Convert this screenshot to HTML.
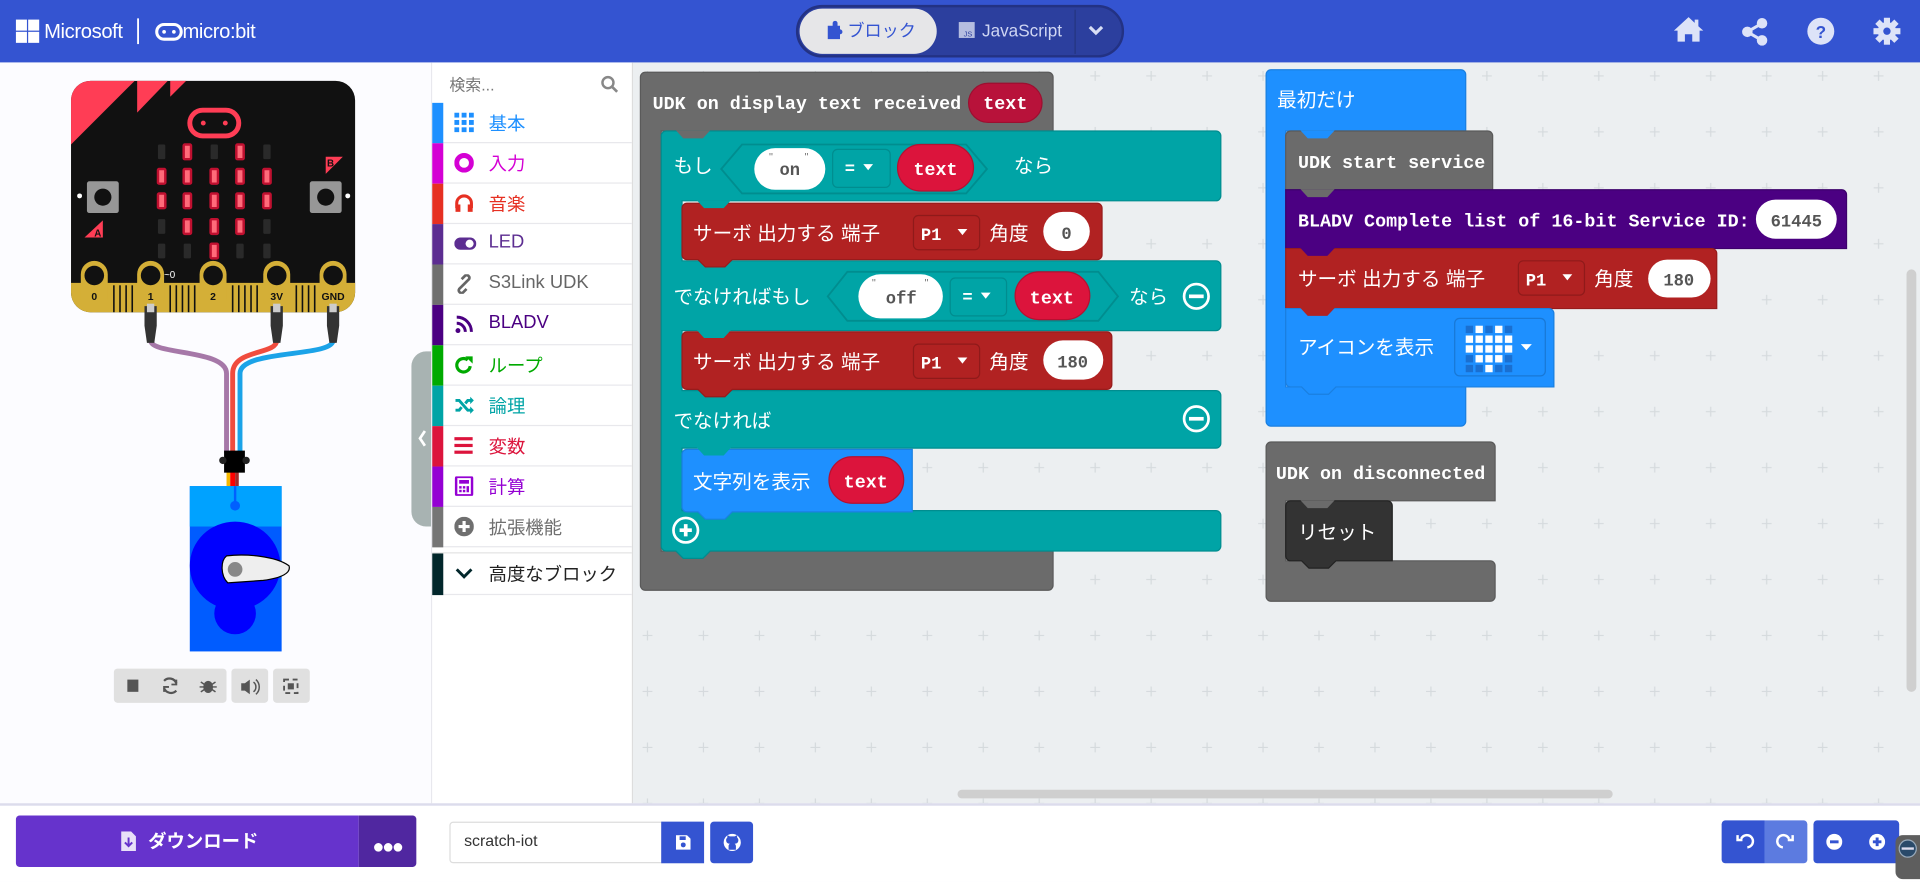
<!DOCTYPE html>
<html><head><meta charset="utf-8">
<style>
html,body{margin:0;padding:0;width:1920px;height:881px;overflow:hidden;background:#fcfcff;}
#root{position:absolute;left:0;top:0;width:1568px;height:720px;transform:scale(1.22449);transform-origin:0 0;font-family:"Liberation Sans","Noto Sans CJK JP",sans-serif;overflow:hidden;}
.abs{position:absolute;}
.tb{position:absolute;left:353px;width:163px;height:32px;border-bottom:1px solid #e8e8ec;font-size:15px;}
.tb .bar{position:absolute;left:0;top:0;width:9px;height:33px;}
.tb .lbl{position:absolute;left:46px;top:6px;}
.tb svg{position:absolute;left:18px;top:8px;}
</style></head><body>
<div id="root">
<!-- header -->
<div class="abs" style="left:0;top:0;width:1568px;height:51px;background:#3454d1;"></div>
<svg class="abs" style="left:0;top:0" width="1568" height="51">
 <rect x="13" y="16" width="9" height="9" fill="#fff"/><rect x="23" y="16" width="9" height="9" fill="#fff"/>
 <rect x="13" y="26" width="9" height="9" fill="#fff"/><rect x="23" y="26" width="9" height="9" fill="#fff"/>
 <text x="36" y="31" fill="#fff" font-size="16.5" font-family="Liberation Sans" letter-spacing="-0.3">Microsoft</text>
 <rect x="112" y="15" width="1.5" height="21" fill="#fff"/>
 <rect x="128" y="20" width="20" height="12" rx="6" fill="none" stroke="#fff" stroke-width="2.5"/>
 <circle cx="134" cy="26" r="1.5" fill="#fff"/><circle cx="142" cy="26" r="1.5" fill="#fff"/>
 <text x="149" y="31" fill="#fff" font-size="16.5" font-family="Liberation Sans" letter-spacing="-0.3">micro:bit</text>
 <rect x="651" y="5" width="266" height="41" rx="20.5" fill="#2c3f9e" stroke="#233284" stroke-width="2"/>
 <rect x="653" y="7" width="112" height="37" rx="18.5" fill="#e6e6e8"/>
 <path d="M676 21h4v-2a2 2 0 0 1 4 0v2h2v3a2 2 0 0 1 0 4v4h-10z" fill="#3454d1"/>
 <text x="692" y="30" fill="#3454d1" font-size="14" font-family="Noto Sans CJK JP">ブロック</text>
 <rect x="783" y="18" width="13" height="13" fill="#b5bde0"/><text x="787" y="30" fill="#2c3f9e" font-size="6" font-family="Liberation Sans">JS</text>
 <text x="802" y="30" fill="#cfd6f3" font-size="14" font-family="Liberation Sans">JavaScript</text>
 <line x1="878" y1="8" x2="878" y2="44" stroke="#24347f" stroke-width="1"/>
 <path d="M890 22l5 5 5-5" stroke="#d8def5" stroke-width="2.6" fill="none"/>
 <path d="M1379 14l-12 11h3v9h6v-6h6v6h6v-9h3l-4-3.6V16h-3v2.7z" fill="#dde3f8"/>
 <g fill="#dde3f8"><circle cx="1439" cy="19" r="4.3"/><circle cx="1427" cy="26" r="4.3"/><circle cx="1439" cy="33" r="4.3"/></g>
 <path d="M1439 19L1427 26L1439 33" stroke="#dde3f8" stroke-width="2.5" fill="none"/>
 <circle cx="1487" cy="25.5" r="11" fill="#dde3f8"/>
 <text x="1487" y="31" fill="#3454d1" font-size="14" font-weight="bold" text-anchor="middle" font-family="Liberation Sans">?</text>
 <g transform="translate(1541 25.5)" fill="#dde3f8"><circle r="7.5"/>
  <rect x="-2.5" y="-11" width="5" height="22"/><rect x="-2.5" y="-11" width="5" height="22" transform="rotate(45)"/><rect x="-2.5" y="-11" width="5" height="22" transform="rotate(90)"/><rect x="-2.5" y="-11" width="5" height="22" transform="rotate(135)"/>
  <circle r="3" fill="#3454d1"/></g>
</svg>

<!-- simulator -->
<div class="abs" style="left:0;top:51px;width:352px;height:606px;background:#fcfcff;border-right:1px solid #e8e8ee;"></div>
<svg class="abs" style="left:0;top:0" width="353" height="657">
 <rect x="58" y="66" width="232" height="189" rx="16" fill="#111"/>
 <path d="M74 66H110L58 118V82A16 16 0 0 1 74 66z" fill="#ff3d55"/>
 <path d="M112 66H137L112 92z" fill="#ff3d55"/>
 <path d="M139 66H152L139 79z" fill="#ff3d55"/>
 <rect x="155" y="90" width="40" height="21" rx="10.5" fill="none" stroke="#ff3d55" stroke-width="4"/>
 <circle cx="166" cy="100.5" r="2" fill="#ff3d55"/><circle cx="184" cy="100.5" r="2" fill="#ff3d55"/>
 <g fill="#2a2a2a">
  <rect x="129" y="118" width="6" height="12" rx="1"/><rect x="172" y="118" width="6" height="12" rx="1"/><rect x="215" y="118" width="6" height="12" rx="1"/>
  <rect x="129" y="179" width="6" height="12" rx="1"/><rect x="215" y="179" width="6" height="12" rx="1"/>
  <rect x="129" y="199" width="6" height="12" rx="1"/><rect x="150" y="199" width="6" height="12" rx="1"/><rect x="193" y="199" width="6" height="12" rx="1"/><rect x="215" y="199" width="6" height="12" rx="1"/>
 </g>
 <g fill="#ff6b7a" stroke="#c01030" stroke-width="2">
  <rect x="150" y="118" width="6" height="12" rx="1"/><rect x="193" y="118" width="6" height="12" rx="1"/>
  <rect x="129" y="138" width="6" height="12" rx="1"/><rect x="150" y="138" width="6" height="12" rx="1"/><rect x="172" y="138" width="6" height="12" rx="1"/><rect x="193" y="138" width="6" height="12" rx="1"/><rect x="215" y="138" width="6" height="12" rx="1"/>
  <rect x="129" y="158" width="6" height="12" rx="1"/><rect x="150" y="158" width="6" height="12" rx="1"/><rect x="172" y="158" width="6" height="12" rx="1"/><rect x="193" y="158" width="6" height="12" rx="1"/><rect x="215" y="158" width="6" height="12" rx="1"/>
  <rect x="150" y="179" width="6" height="12" rx="1"/><rect x="172" y="179" width="6" height="12" rx="1"/><rect x="193" y="179" width="6" height="12" rx="1"/>
  <rect x="172" y="199" width="6" height="12" rx="1"/>
 </g>
 <rect x="71" y="148" width="26" height="26" rx="2" fill="#979797"/><circle cx="84" cy="161" r="7" fill="#111"/>
 <rect x="253" y="148" width="26" height="26" rx="2" fill="#979797"/><circle cx="266" cy="161" r="7" fill="#111"/>
 <circle cx="65" cy="160" r="2" fill="#fff"/><circle cx="284" cy="160" r="2" fill="#fff"/>
 <path d="M69 194L84 180V194z" fill="#ff3d55"/><text x="77" y="193" font-size="8" font-weight="bold" fill="#111" font-family="Liberation Sans">A</text>
 <path d="M266 128H280L266 142z" fill="#ff3d55"/><text x="267" y="136" font-size="8" font-weight="bold" fill="#111" font-family="Liberation Sans">B</text>
 <path d="M58 231H290V239A16 16 0 0 1 274 255H74A16 16 0 0 1 58 239z" fill="#d4af37"/>
 <g stroke="#111" stroke-width="1.3">
  <line x1="93" y1="233" x2="93" y2="255"/><line x1="98" y1="233" x2="98" y2="255"/><line x1="103" y1="233" x2="103" y2="255"/><line x1="108" y1="233" x2="108" y2="255"/>
  <line x1="139" y1="233" x2="139" y2="255"/><line x1="144" y1="233" x2="144" y2="255"/><line x1="149" y1="233" x2="149" y2="255"/><line x1="154" y1="233" x2="154" y2="255"/><line x1="159" y1="233" x2="159" y2="255"/>
  <line x1="190" y1="233" x2="190" y2="255"/><line x1="195" y1="233" x2="195" y2="255"/><line x1="200" y1="233" x2="200" y2="255"/><line x1="205" y1="233" x2="205" y2="255"/><line x1="210" y1="233" x2="210" y2="255"/>
  <line x1="242" y1="233" x2="242" y2="255"/><line x1="247" y1="233" x2="247" y2="255"/><line x1="252" y1="233" x2="252" y2="255"/><line x1="257" y1="233" x2="257" y2="255"/>
 </g>
 <g fill="#d4af37">
  <rect x="66" y="213" width="22" height="42" rx="11"/><rect x="112" y="213" width="22" height="42" rx="11"/><rect x="163" y="213" width="22" height="42" rx="11"/><rect x="215" y="213" width="22" height="42" rx="11"/><rect x="261" y="213" width="22" height="42" rx="11"/>
 </g>
 <g fill="#111"><circle cx="77" cy="225" r="8"/><circle cx="123" cy="225" r="8"/><circle cx="174" cy="225" r="8"/><circle cx="226" cy="225" r="8"/><circle cx="272" cy="225" r="8"/></g>
 <g font-size="8.5" font-weight="bold" fill="#111" font-family="Liberation Sans" text-anchor="middle">
  <text x="77" y="245">0</text><text x="123" y="245">1</text><text x="174" y="245">2</text><text x="226" y="245">3V</text><text x="272" y="245">GND</text></g>
 <text x="134" y="227" font-size="8" fill="#fff" font-family="Liberation Sans">~0</text>
 <path d="M123 278C123 290 185 285 185 305V370" stroke="#a678a8" stroke-width="4" fill="none"/>
 <path d="M226 278C226 290 190 285 190 305V370" stroke="#f04c3e" stroke-width="4" fill="none"/>
 <path d="M272 278C272 292 196 285 196 305V370" stroke="#1ba3e8" stroke-width="4" fill="none"/>
 <g fill="#333"><path d="M118 250h10v16l-2 14h-6l-2-14z"/><path d="M221 250h10v16l-2 14h-6l-2-14z"/><path d="M267 250h10v16l-2 14h-6l-2-14z"/></g>
 <g fill="#ccc"><rect x="120" y="248" width="6" height="7"/><rect x="223" y="248" width="6" height="7"/><rect x="269" y="248" width="6" height="7"/></g>
 <rect x="185" y="384" width="3" height="13" fill="#f5b800"/><rect x="188" y="384" width="4" height="13" fill="#f00"/><rect x="192" y="384" width="3" height="13" fill="#a52a2a"/>
 <rect x="183" y="368" width="17" height="18" fill="#000"/><circle cx="182" cy="376" r="3" fill="#222"/><circle cx="201" cy="376" r="3" fill="#222"/>
 <rect x="155" y="397" width="75" height="135" fill="#005cff"/>
 <rect x="155" y="397" width="75" height="33" fill="#00a2ff"/>
 <line x1="192" y1="397" x2="192" y2="410" stroke="#0060ff" stroke-width="2"/><circle cx="192" cy="413" r="4" fill="#0060ff"/>
 <ellipse cx="192" cy="462" rx="37" ry="36" fill="#0000ff"/><circle cx="192" cy="501" r="17" fill="#0000ff"/>
 <path d="M185 454C200 452 225 454 236 462C238 468 230 472 215 474L186 476C180 470 180 458 185 454z" fill="#eee" stroke="#000" stroke-width="1"/>
 <circle cx="192" cy="465" r="6" fill="#888"/>
 <rect x="93" y="546" width="92" height="28" rx="3" fill="#e0e0e0"/>
 <rect x="189" y="546" width="30" height="28" rx="3" fill="#e0e0e0"/>
 <rect x="223" y="546" width="30" height="28" rx="3" fill="#e0e0e0"/>
 <rect x="104" y="555" width="9" height="10" fill="#555"/>
 <path d="M134 556a6 6 0 0 1 10 2M144 564a6 6 0 0 1-10-2" stroke="#555" stroke-width="1.8" fill="none"/>
 <path d="M144 555v4h-4M134 565v-4h4" stroke="#555" stroke-width="1.5" fill="none"/>
 <ellipse cx="170" cy="561" rx="4" ry="5" fill="#555"/><path d="M164 557l12 8M176 557l-12 8M163 561h14" stroke="#555" stroke-width="1.2"/>
 <path d="M197 558h3l4-3v12l-4-3h-3z" fill="#555"/><path d="M207 557a5 5 0 0 1 0 8M209 555a8 8 0 0 1 0 12" stroke="#555" stroke-width="1.2" fill="none"/>
 <rect x="232" y="555" width="11" height="11" fill="none" stroke="#555" stroke-width="1.5" stroke-dasharray="4 3"/><rect x="235" y="558" width="5" height="5" fill="#555"/>
 <path d="M352 287V430H348A12 12 0 0 1 336 418V299A12 12 0 0 1 348 287z" fill="#a8b3b2"/>
 <path d="M347 352l-4 6 4 6" stroke="#fff" stroke-width="2.2" fill="none"/>
</svg>

<!-- toolbox -->
<div class="abs" style="left:353px;top:51px;width:163px;height:606px;background:#fff;border-right:1px solid #ddd;"></div>
<div class="abs" style="left:367px;top:59px;font-size:13px;color:#777;">検索...</div>
<svg class="abs" style="left:490px;top:61px" width="16" height="16"><circle cx="6.5" cy="6.5" r="4.5" stroke="#888" stroke-width="2" fill="none"/><path d="M10 10l4 4" stroke="#888" stroke-width="2.2"/></svg>
<div class="tb" style="top:84px;color:#1e90ff"><div class="bar" style="background:#1e90ff"></div><svg width="16" height="16"><g fill="#1e90ff"><rect x="0" y="0" width="4" height="4"/><rect x="6" y="0" width="4" height="4"/><rect x="12" y="0" width="4" height="4"/><rect x="0" y="6" width="4" height="4"/><rect x="6" y="6" width="4" height="4"/><rect x="12" y="6" width="4" height="4"/><rect x="0" y="12" width="4" height="4"/><rect x="6" y="12" width="4" height="4"/><rect x="12" y="12" width="4" height="4"/></g></svg><span class="lbl">基本</span></div>
<div class="tb" style="top:117px;color:#d400d4"><div class="bar" style="background:#d400d4"></div><svg width="16" height="16"><circle cx="8" cy="8" r="6" stroke="#d400d4" stroke-width="4" fill="none"/></svg><span class="lbl">入力</span></div>
<div class="tb" style="top:150px;color:#e63022"><div class="bar" style="background:#e63022"></div><svg width="16" height="16"><path d="M2 12V8a6 6 0 0 1 12 0v4" stroke="#e63022" stroke-width="2.5" fill="none"/><rect x="1" y="9" width="4" height="6" fill="#e63022"/><rect x="11" y="9" width="4" height="6" fill="#e63022"/></svg><span class="lbl">音楽</span></div>
<div class="tb" style="top:183px;color:#5c2d91"><div class="bar" style="background:#5c2d91"></div><svg width="18" height="16"><rect x="0" y="3" width="18" height="10" rx="5" fill="#5c2d91"/><circle cx="12.5" cy="8" r="3.3" fill="#fff"/></svg><span class="lbl">LED</span></div>
<div class="tb" style="top:216px;color:#666"><div class="bar" style="background:#6f6f6f"></div><svg width="16" height="16"><path d="M7 9l-3 3a2.2 2.2 0 0 0 3 3l3-3M9 7l3-3a2.2 2.2 0 0 0-3-3L6 4M6 10l4-4" stroke="#666" stroke-width="2.2" fill="none"/></svg><span class="lbl">S3Link UDK</span></div>
<div class="tb" style="top:249px;color:#4b0082"><div class="bar" style="background:#4b0082"></div><svg width="16" height="16"><circle cx="3" cy="13" r="2" fill="#4b0082"/><path d="M2 7a7 7 0 0 1 7 7M2 2a12 12 0 0 1 12 12" stroke="#4b0082" stroke-width="2.4" fill="none"/></svg><span class="lbl">BLADV</span></div>
<div class="tb" style="top:282px;color:#00aa00"><div class="bar" style="background:#00aa00"></div><svg width="16" height="16"><path d="M13 9a5.5 5.5 0 1 1-2-5" stroke="#00aa00" stroke-width="2.6" fill="none"/><path d="M9 1h6v6z" fill="#00aa00"/></svg><span class="lbl">ループ</span></div>
<div class="tb" style="top:315px;color:#00a4a6"><div class="bar" style="background:#00a4a6"></div><svg width="16" height="16"><path d="M1 4h3l7 8h3M1 12h3l2-2.5M9 6.5L11 4h3" stroke="#00a4a6" stroke-width="2.4" fill="none"/><path d="M13 1l3 3-3 3zM13 9l3 3-3 3z" fill="#00a4a6"/></svg><span class="lbl">論理</span></div>
<div class="tb" style="top:348px;color:#dc143c"><div class="bar" style="background:#dc143c"></div><svg width="16" height="16"><g fill="#dc143c"><rect x="0" y="1" width="15" height="2.6"/><rect x="0" y="6.5" width="15" height="2.6"/><rect x="0" y="12" width="15" height="2.6"/></g></svg><span class="lbl">変数</span></div>
<div class="tb" style="top:381px;color:#9400d3"><div class="bar" style="background:#9400d3"></div><svg width="16" height="16"><rect x="1.5" y="0.5" width="13" height="15" rx="1" stroke="#9400d3" stroke-width="2" fill="none"/><rect x="4" y="3" width="8" height="3" fill="#9400d3"/><g fill="#9400d3"><rect x="4" y="8" width="2" height="2"/><rect x="7" y="8" width="2" height="2"/><rect x="10" y="8" width="2" height="5"/><rect x="4" y="11" width="2" height="2"/><rect x="7" y="11" width="2" height="2"/></g></svg><span class="lbl">計算</span></div>
<div class="tb" style="top:414px;color:#6f6f6f"><div class="bar" style="background:#757575"></div><svg width="16" height="16"><circle cx="8" cy="8" r="8" fill="#6f6f6f"/><path d="M8 3.5v9M3.5 8h9" stroke="#fff" stroke-width="2.6"/></svg><span class="lbl">拡張機能</span></div>
<div class="abs" style="left:353px;top:451px;width:163px;height:1px;background:#e3e3e3"></div>
<div class="tb" style="top:452px;color:#222;height:33px"><div class="bar" style="background:#02272b;height:34px"></div><svg width="16" height="16"><path d="M2 5l6 6 6-6" stroke="#02272b" stroke-width="2.4" fill="none"/></svg><span class="lbl">高度なブロック</span></div>

<!-- workspace -->
<div class="abs" style="left:517px;top:51px;width:1051px;height:606px;background:#eceff1;"></div>
<svg class="abs" style="left:517px;top:51px" width="1051" height="606">
 <defs><pattern id="g" x="-11" y="-57.5" width="45.7" height="45.7" patternUnits="userSpaceOnUse">
  <path d="M18.8 22.8h8M22.8 18.8v8" stroke="#d5dadd" stroke-width="1"/></pattern></defs>
 <rect width="1051" height="606" fill="url(#g)"/>
 <rect x="265" y="594" width="535" height="7" rx="3.5" fill="#cfcfcf"/>
 <rect x="1040" y="169" width="8" height="345" rx="4" fill="#cfcfcf"/>
</svg>

<svg class="abs" style="left:0;top:0" width="1568" height="657" font-family="Liberation Sans, Noto Sans CJK JP, sans-serif">
 <defs><path id="tab" d="M12 -0.5H18V0L24 6H35L41 0V-0.5H47V0L41 6.5H18z"/></defs>
 <!-- block 1 hat -->
 <path d="M523 63a4 4 0 0 1 4-4H856a4 4 0 0 1 4 4V107H540V450H860V478a4 4 0 0 1-4 4H527a4 4 0 0 1-4-4z" fill="#6b6b6b" stroke="#5a5a5a"/>
 <text x="533" y="89" font-size="15" fill="#fff" font-family="Liberation Mono" font-weight="bold">UDK on display text received</text>
 <rect x="791" y="68" width="60" height="32" rx="16" fill="#b8123a" stroke="#9c0f30"/>
 <text x="821" y="89" font-size="15" fill="#fff" text-anchor="middle" font-family="Liberation Mono" font-weight="bold">text</text>
 <!-- if block teal -->
 <path d="M540 111a4 4 0 0 1 4-4H993a4 4 0 0 1 4 4V160a4 4 0 0 1-4 4H557V213H993a4 4 0 0 1 4 4V266a4 4 0 0 1-4 4H557V319H993a4 4 0 0 1 4 4V362a4 4 0 0 1-4 4H557V417H993a4 4 0 0 1 4 4V446a4 4 0 0 1-4 4H580L574 456H558L552 450H544a4 4 0 0 1-4-4z" fill="#00a4a6" stroke="#008d8f"/>
 <text x="550" y="141" font-size="16" fill="#fff">もし</text>
 <path d="M606 118H789L806 138L789 158H606L589 138z" fill="#00a4a6" stroke="#008d8f" stroke-width="1.5"/>
 <rect x="616" y="121" width="58" height="34" rx="17" fill="#fff"/>
 <text x="645" y="143" font-size="14" fill="#555" text-anchor="middle" font-family="Liberation Mono" font-weight="bold">on</text>
 <text x="628" y="131" font-size="9" fill="#777">"</text><text x="657" y="131" font-size="9" fill="#777">"</text>
 <rect x="680" y="122" width="47" height="31" rx="4" fill="#00a4a6" stroke="#008d8f"/>
 <text x="690" y="142" font-size="14" fill="#fff" font-weight="bold">=</text><path d="M705 134h8l-4 5z" fill="#fff"/>
 <rect x="733" y="118" width="62" height="38" rx="19" fill="#dc143c" stroke="#b51131"/>
 <text x="764" y="143" font-size="15" fill="#fff" text-anchor="middle" font-family="Liberation Mono" font-weight="bold">text</text>
 <text x="828" y="141" font-size="16" fill="#fff">なら</text>
 <!-- servo 1 -->
 <path d="M557 170a4 4 0 0 1 4-4H896a4 4 0 0 1 4 4V208a4 4 0 0 1-4 4H598L592 218H576L570 212H561a4 4 0 0 1-4-4z" fill="#b12222" stroke="#971c1c"/>
 <text x="566" y="196" font-size="16" fill="#fff">サーボ 出力する 端子</text>
 <rect x="746" y="176" width="54" height="28" rx="4" fill="#b12222" stroke="#8f1a1a"/>
 <text x="752" y="196" font-size="14" fill="#fff" font-family="Liberation Mono" font-weight="bold">P1</text><path d="M782 187h8l-4 5z" fill="#fff"/>
 <text x="808" y="196" font-size="16" fill="#fff">角度</text>
 <rect x="852" y="173" width="38" height="32" rx="16" fill="#fff"/>
 <text x="871" y="195" font-size="14" fill="#555" text-anchor="middle" font-family="Liberation Mono" font-weight="bold">0</text>
 <!-- elseif -->
 <text x="550" y="248" font-size="16" fill="#fff">でなければもし</text>
 <path d="M692 222H897L913 242L897 262H692L676 242z" fill="#00a4a6" stroke="#008d8f" stroke-width="1.5"/>
 <rect x="701" y="224" width="69" height="36" rx="18" fill="#fff"/>
 <text x="736" y="248" font-size="14" fill="#555" text-anchor="middle" font-family="Liberation Mono" font-weight="bold">off</text>
 <text x="712" y="234" font-size="9" fill="#777">"</text><text x="755" y="234" font-size="9" fill="#777">"</text>
 <rect x="776" y="227" width="46" height="31" rx="4" fill="#00a4a6" stroke="#008d8f"/>
 <text x="786" y="247" font-size="14" fill="#fff" font-weight="bold">=</text><path d="M801 239h8l-4 5z" fill="#fff"/>
 <rect x="829" y="222" width="61" height="39" rx="19.5" fill="#dc143c" stroke="#b51131"/>
 <text x="859" y="248" font-size="15" fill="#fff" text-anchor="middle" font-family="Liberation Mono" font-weight="bold">text</text>
 <text x="922" y="248" font-size="16" fill="#fff">なら</text>
 <circle cx="977" cy="242" r="10" fill="none" stroke="#fff" stroke-width="2.2"/><rect x="971" y="240.5" width="12" height="3" fill="#fff"/>
 <!-- servo 2 -->
 <path d="M557 275a4 4 0 0 1 4-4H904a4 4 0 0 1 4 4V314a4 4 0 0 1-4 4H598L592 324H576L570 318H561a4 4 0 0 1-4-4z" fill="#b12222" stroke="#971c1c"/>
 <text x="566" y="301" font-size="16" fill="#fff">サーボ 出力する 端子</text>
 <rect x="746" y="281" width="54" height="28" rx="4" fill="#b12222" stroke="#8f1a1a"/>
 <text x="752" y="301" font-size="14" fill="#fff" font-family="Liberation Mono" font-weight="bold">P1</text><path d="M782 292h8l-4 5z" fill="#fff"/>
 <text x="808" y="301" font-size="16" fill="#fff">角度</text>
 <rect x="852" y="278" width="49" height="32" rx="16" fill="#fff"/>
 <text x="876" y="300" font-size="14" fill="#555" text-anchor="middle" font-family="Liberation Mono" font-weight="bold">180</text>
 <!-- else -->
 <text x="550" y="349" font-size="16" fill="#fff">でなければ</text>
 <circle cx="977" cy="342" r="10" fill="none" stroke="#fff" stroke-width="2.2"/><rect x="971" y="340.5" width="12" height="3" fill="#fff"/>
 <!-- show string -->
 <path d="M557 371a4 4 0 0 1 4-4H745V418H598L592 424H576L570 418H561a4 4 0 0 1-4-4z" fill="#1e90ff" stroke="#1a7fe0"/>
 <text x="566" y="399" font-size="16" fill="#fff">文字列を表示</text>
 <rect x="677" y="373" width="61" height="38" rx="19" fill="#dc143c" stroke="#b51131"/>
 <text x="707" y="398" font-size="15" fill="#fff" text-anchor="middle" font-family="Liberation Mono" font-weight="bold">text</text>
 <circle cx="560" cy="433" r="10" fill="none" stroke="#fff" stroke-width="2.2"/><path d="M555 433h10M560 428v10" stroke="#fff" stroke-width="3"/>

 <!-- block 2 -->
 <path d="M1034 61a4 4 0 0 1 4-4H1193a4 4 0 0 1 4 4V107H1050V316H1197V344a4 4 0 0 1-4 4H1038a4 4 0 0 1-4-4z" fill="#1e90ff" stroke="#1a7fe0"/>
 <text x="1043" y="87" font-size="16" fill="#fff">最初だけ</text>
 <path d="M1050 111a4 4 0 0 1 4-4H1215a4 4 0 0 1 4 4V155H1050z" fill="#6b6b6b" stroke="#5a5a5a"/>
 <text x="1060" y="137" font-size="15" fill="#fff" font-family="Liberation Mono" font-weight="bold">UDK start service</text>
 <path d="M1050 155H1504a4 4 0 0 1 4 4V203H1050z" fill="#4b0082" stroke="#3d006b"/>
 <text x="1060" y="185" font-size="15" fill="#fff" font-family="Liberation Mono" font-weight="bold">BLADV Complete list of 16-bit Service ID:</text>
 <rect x="1434" y="163" width="66" height="32" rx="16" fill="#fff"/>
 <text x="1467" y="185" font-size="14" fill="#555" text-anchor="middle" font-family="Liberation Mono" font-weight="bold">61445</text>
 <path d="M1050 203H1398a4 4 0 0 1 4 4V252H1050z" fill="#b12222" stroke="#971c1c"/>
 <text x="1060" y="233" font-size="16" fill="#fff">サーボ 出力する 端子</text>
 <rect x="1240" y="213" width="54" height="28" rx="4" fill="#b12222" stroke="#8f1a1a"/>
 <text x="1246" y="233" font-size="14" fill="#fff" font-family="Liberation Mono" font-weight="bold">P1</text><path d="M1276 224h8l-4 5z" fill="#fff"/>
 <text x="1302" y="233" font-size="16" fill="#fff">角度</text>
 <rect x="1346" y="212" width="51" height="31" rx="15.5" fill="#fff"/>
 <text x="1371" y="233" font-size="14" fill="#555" text-anchor="middle" font-family="Liberation Mono" font-weight="bold">180</text>
 <path d="M1050 252H1265a4 4 0 0 1 4 4V316H1091L1085 322H1069L1063 316H1054a4 4 0 0 1-4-4z" fill="#1e90ff" stroke="#1a7fe0"/>
 <text x="1060" y="289" font-size="16" fill="#fff">アイコンを表示</text>
 <rect x="1188" y="260" width="74" height="47" rx="4" fill="#1e90ff" stroke="#1878d6"/>
 <g fill="#1a6fd0">
  <rect x="1197" y="266" width="6" height="6"/><rect x="1213" y="266" width="6" height="6"/><rect x="1229" y="266" width="6" height="6"/>
  <rect x="1197" y="290" width="6" height="6"/><rect x="1229" y="290" width="6" height="6"/>
  <rect x="1197" y="298" width="6" height="6"/><rect x="1205" y="298" width="6" height="6"/><rect x="1221" y="298" width="6" height="6"/><rect x="1229" y="298" width="6" height="6"/>
 </g>
 <g fill="#fff">
  <rect x="1205" y="266" width="6" height="6"/><rect x="1221" y="266" width="6" height="6"/>
  <rect x="1197" y="274" width="6" height="6"/><rect x="1205" y="274" width="6" height="6"/><rect x="1213" y="274" width="6" height="6"/><rect x="1221" y="274" width="6" height="6"/><rect x="1229" y="274" width="6" height="6"/>
  <rect x="1197" y="282" width="6" height="6"/><rect x="1205" y="282" width="6" height="6"/><rect x="1213" y="282" width="6" height="6"/><rect x="1221" y="282" width="6" height="6"/><rect x="1229" y="282" width="6" height="6"/>
  <rect x="1205" y="290" width="6" height="6"/><rect x="1213" y="290" width="6" height="6"/><rect x="1221" y="290" width="6" height="6"/>
  <rect x="1213" y="298" width="6" height="6"/>
 </g>
 <path d="M1242 281h9l-4.5 5z" fill="#fff"/>
 <!-- block 3 -->
 <path d="M1034 365a4 4 0 0 1 4-4H1217a4 4 0 0 1 4 4V409H1050V458H1217a4 4 0 0 1 4 4V487a4 4 0 0 1-4 4H1038a4 4 0 0 1-4-4z" fill="#6b6b6b" stroke="#5a5a5a"/>
 <text x="1042" y="391" font-size="15" fill="#fff" font-family="Liberation Mono" font-weight="bold">UDK on disconnected</text>
 <path d="M1050 413a4 4 0 0 1 4-4H1133a4 4 0 0 1 4 4V458H1091L1085 464H1069L1063 458H1054a4 4 0 0 1-4-4z" fill="#333" stroke="#222"/>
 <text x="1060" y="440" font-size="16" fill="#fff">リセット</text>

 <!-- parent tabs (notches) -->
 <path d="M552 106.5H580L574 113H558z" fill="#6b6b6b"/>
 <path d="M569 163.5H597L591 170H575z" fill="#00a4a6"/>
 <path d="M569 269.5H597L591 276H575z" fill="#00a4a6"/>
 <path d="M569 365.5H597L591 372H575z" fill="#00a4a6"/>
 <path d="M1062 106.5H1090L1084 113H1068z" fill="#1e90ff"/>
 <path d="M1062 154.5H1090L1084 161H1068z" fill="#6b6b6b"/>
 <path d="M1062 202.5H1090L1084 209H1068z" fill="#4b0082"/>
 <path d="M1062 251.5H1090L1084 258H1068z" fill="#b12222"/>
 <path d="M1062 408.5H1090L1084 415H1068z" fill="#6b6b6b"/>
</svg>

<!-- bottom bar -->
<div class="abs" style="left:0;top:656px;width:1568px;height:64px;background:#fff;border-top:2px solid #dcdcec;"></div>
<div class="abs" style="left:13px;top:666px;width:280px;height:42px;background:#6633cc;border-radius:3px 0 0 3px;"></div>
<div class="abs" style="left:293px;top:666px;width:47px;height:42px;background:#5027a0;border-radius:0 3px 3px 0;"></div>
<svg class="abs" style="left:98px;top:679px" width="14" height="16"><path d="M1 0h8l4 4v12H1z" fill="#e8e0f8"/><path d="M7 5v7M4 9l3 3 3-3" stroke="#6633cc" stroke-width="1.6" fill="none"/></svg>
<div class="abs" style="left:121px;top:676px;color:#fff;font-size:15px;font-weight:bold;">ダウンロード</div>
<svg class="abs" style="left:305px;top:687px" width="26" height="10"><circle cx="4" cy="5" r="3.5" fill="#fff"/><circle cx="12" cy="5" r="3.5" fill="#fff"/><circle cx="20" cy="5" r="3.5" fill="#fff"/></svg>
<div class="abs" style="left:367px;top:671px;width:172px;height:32px;border:1px solid #ddd;border-radius:3px 0 0 3px;background:#fff;"></div>
<div class="abs" style="left:379px;top:679px;font-size:13px;color:#333;">scratch-iot</div>
<div class="abs" style="left:540px;top:671px;width:35px;height:34px;background:#3454d1;"></div>
<svg class="abs" style="left:552px;top:682px" width="12" height="12"><path d="M0 0h9l3 3v9H0z" fill="#fff"/><rect x="3" y="1" width="5" height="3" fill="#3454d1"/><circle cx="6" cy="8" r="2" fill="#3454d1"/></svg>
<div class="abs" style="left:580px;top:671px;width:35px;height:34px;background:#3454d1;border-radius:3px;"></div>
<svg class="abs" style="left:590px;top:680px" width="16" height="16"><circle cx="8" cy="8" r="7" fill="#fff"/><path d="M5 14v-3c0-1 1-2 1-2-2 0-3-1-3-3 0-1 1-2 1-2V2l2 1h4l2-1v2s1 1 1 2c0 2-1 3-3 3 0 0 1 1 1 2v3z" fill="#3454d1"/></svg>
<div class="abs" style="left:1406px;top:670px;width:35px;height:35px;background:#3454d1;border-radius:3px 0 0 3px;"></div>
<div class="abs" style="left:1441px;top:670px;width:35px;height:35px;background:#5c7be0;border-radius:0 3px 3px 0;"></div>
<div class="abs" style="left:1481px;top:670px;width:70px;height:35px;background:#3454d1;border-radius:3px;"></div>
<svg class="abs" style="left:1406px;top:670px" width="150" height="35">
 <path d="M21 22a5 5 0 1 0-5-7M13 12v4h4" stroke="#fff" stroke-width="2" fill="none"/>
 <path d="M50 22a5 5 0 1 1 5-7M58 12v4h-4" stroke="#fff" stroke-width="2" fill="none"/>
 <circle cx="92" cy="17.5" r="6.5" fill="#fff"/><rect x="88.5" y="16.3" width="7" height="2.4" fill="#3454d1"/>
 <circle cx="127" cy="17.5" r="6.5" fill="#fff"/><path d="M123.5 17.5h7M127 14v7" stroke="#3454d1" stroke-width="2.4"/>
</svg>
<div class="abs" style="left:1548px;top:682px;width:24px;height:36px;background:#5e5e5e;border-radius:6px 0 0 6px;"></div>
<svg class="abs" style="left:1550px;top:685px" width="16" height="16"><circle cx="8" cy="8" r="7" fill="#2a4a6a" stroke="#9ab" stroke-width="1"/><path d="M3 8h10" stroke="#dde" stroke-width="2"/></svg>
</div>
</body></html>
